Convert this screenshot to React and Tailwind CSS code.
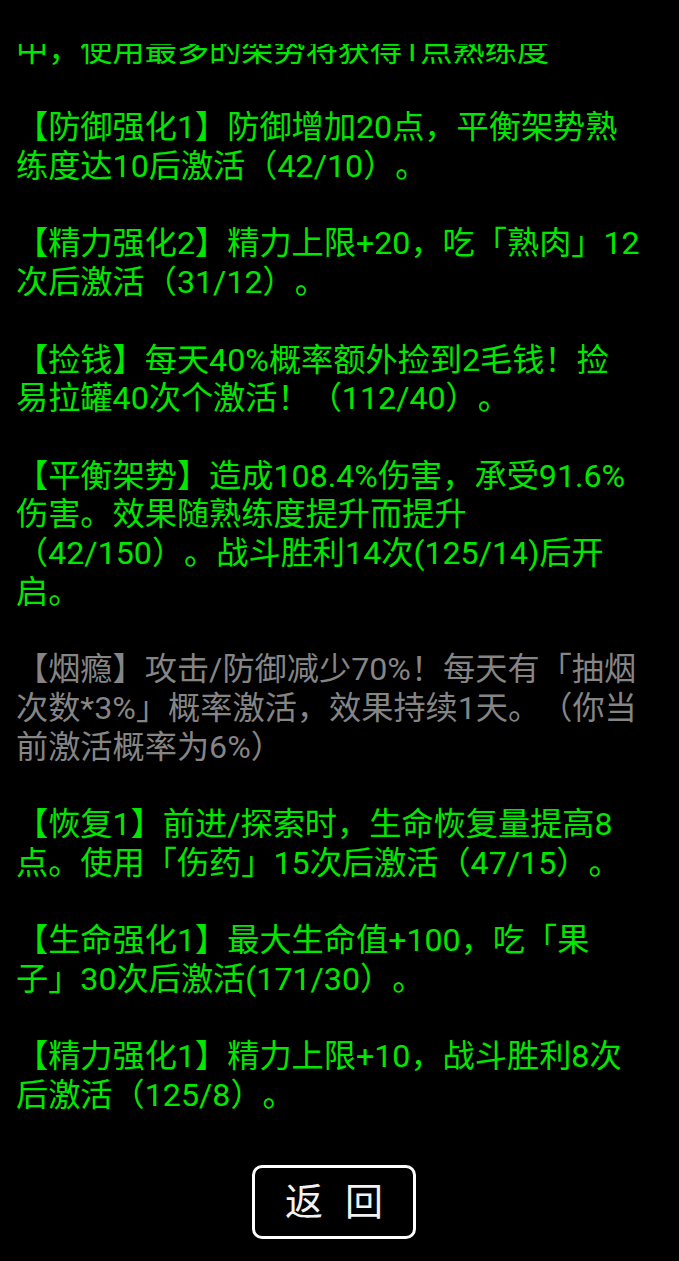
const entries = [
  { lines: ['中，使用最多的架势将获得1点熟练度'] },
  { lines: ['【防御强化1】防御增加20点，平衡架势熟', '练度达10后激活（42/10）。'] },
  { lines: ['【精力强化2】精力上限+20，吃「熟肉」12', '次后激活（31/12）。'] },
  { lines: ['【捡钱】每天40%概率额外捡到2毛钱！捡', '易拉罐40次个激活！（112/40）。'] },
  {
    lines: [
      '【平衡架势】造成108.4%伤害，承受91.6%',
      '伤害。效果随熟练度提升而提升',
      '（42/150）。战斗胜利14次(125/14)后开',
      '启。',
    ],
  },
  {
    dim: true,
    lines: [
      '【烟瘾】攻击/防御减少70%！每天有「抽烟',
      '次数*3%」概率激活，效果持续1天。（你当',
      '前激活概率为6%）',
    ],
  },
  { lines: ['【恢复1】前进/探索时，生命恢复量提高8', '点。使用「伤药」15次后激活（47/15）。'] },
  { lines: ['【生命强化1】最大生命值+100，吃「果', '子」30次后激活(171/30）。'] },
  { lines: ['【精力强化1】精力上限+10，战斗胜利8次', '后激活（125/8）。'] },
];

const Entry = ({ lines, dim }) => (
  <div className={`mb-[38.7px] ${dim ? 'text-[#858585]' : 'text-[#00e800]'}`}>
    {lines.map((l, i) => (
      <div key={i} className="whitespace-nowrap">{l}</div>
    ))}
  </div>
);

export default function App() {
  return (
    <div className="w-[679px] h-[1261px] bg-black flex flex-col font-['Roboto','Noto_Sans_CJK_SC',sans-serif] overflow-hidden [text-spacing-trim:space-all]">
      {/* top strip */}
      <div className="h-[44px] shrink-0" />

      {/* scrolled talent list */}
      <div className="h-[1106px] shrink-0 overflow-hidden">
        <div className="-mt-[13px] pl-[16px] pr-[16px] text-[32.2px] leading-[38.7px]">
          {entries.map((e, i) => (
            <Entry key={i} {...e} />
          ))}
        </div>
      </div>

      {/* footer */}
      <div className="flex justify-center pt-[15px] pr-[11px]">
        <button className="w-[164px] h-[74px] border-[3px] border-white rounded-[10px] flex items-center justify-center gap-[22px] text-[#f2f2f2] text-[38px] leading-none">
          <span>返</span>
          <span>回</span>
        </button>
      </div>
    </div>
  );
}
